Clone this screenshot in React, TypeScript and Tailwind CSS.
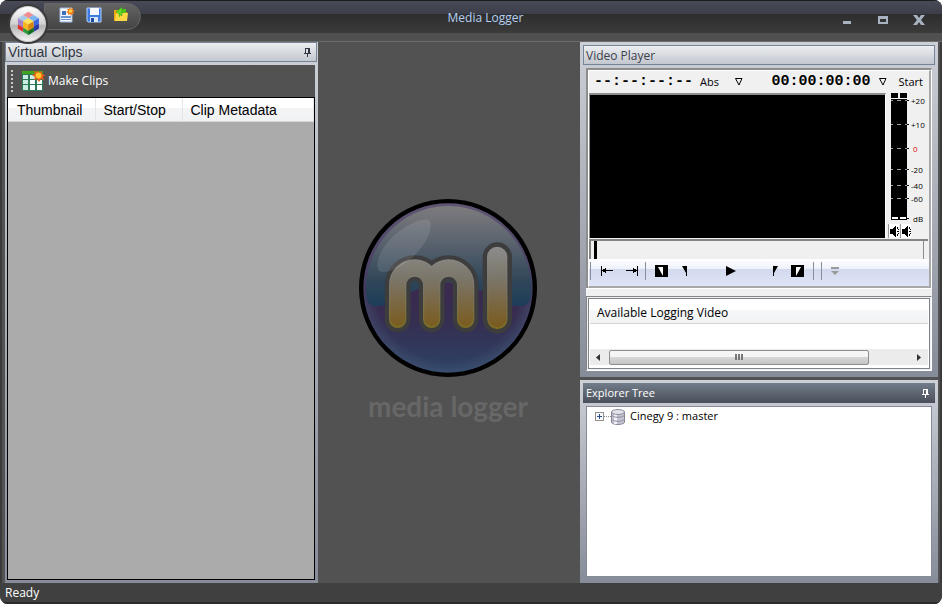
import type { FC, ReactNode } from "react";

const columns = [
	{ name: "Thumbnail", className: "w-[87px]" },
	{ name: "Start/Stop", className: "w-[87px]" },
	{ name: "Clip Metadata", className: "" },
];

const levels = [
	{ label: "+20", y: 8 },
	{ label: "+10", y: 32 },
	{ label: "0", y: 56 },
	{ label: "-20", y: 77 },
	{ label: "-40", y: 93 },
	{ label: "-60", y: 106 },
	{ label: "dB", y: 126 },
];

const Pin: FC = () => (
	<svg width="9" height="9" viewBox="0 0 9 9" fill="currentColor" shapeRendering="crispEdges">
		<path d="M2 0h5v5h1v1H5v3H4V6H1V5h1zM3 1v4h2V1z" fillRule="evenodd" />
	</svg>
);

const AppLogo: FC = () => (
	<svg width="36" height="36" viewBox="0 0 36 36">
		<defs>
			<linearGradient id="orb" x1="0" y1="0" x2="0" y2="1">
				<stop offset="0" stopColor="#fff" />
				<stop offset="0.5" stopColor="#d2d2d2" />
				<stop offset="0.55" stopColor="#b4b4b4" />
				<stop offset="1" stopColor="#f4f4f4" />
			</linearGradient>
		</defs>
		<circle cx="18" cy="18" r="17.5" fill="url(#orb)" stroke="#c9c9c9" />
		<g transform="translate(-.5 -1.500) scale(1.050)">
			<path d="M18 7l5 3-5 3-5-3z" fill="#ee8c92" />
			<path d="M13 10l5 3-5 3-5-3z" fill="#a9cbe8" />
			<path d="M23 10l5 3-5 3-5-3z" fill="#7cb5f0" />
			<path d="M8 13l5 3v6l-5-3z" fill="#a583c8" />
			<path d="M28 13l-5 3v5l5-3z" fill="#3b66e2" />
			<path d="M8 19l5 3v4l-5-3z" fill="#e5302a" />
			<path d="M28 18v5l-5 3v-5z" fill="#2a39a8" />
			<path d="M13 22l5 3 5-3v4l-5 3-5-3z" fill="#2e9a3c" />
			<path d="M18 25l5-3v4l-5 3z" fill="#156c22" />
			<path d="M18 13l5 3-5 3-5-3z" fill="#ffe45c" />
			<path d="M13 16l5 3v6l-5-3z" fill="#f8b51c" />
			<path d="M23 16l-5 3v6l5-3z" fill="#d8850c" />
		</g>
	</svg>
);

const NewIcon: FC = () => (
	<svg width="16" height="16" viewBox="0 0 16 16">
		<path d="M1 1h12v14H1z" fill="#f4f8fe" stroke="#9db7dd" />
		<path d="M3 4h4v4H3z" fill="#3d70b8" />
		<path d="M2 9h10v2H2zM2 12h10v1H2z" fill="#6c95cf" />
		<path d="M11 0l1 2 2-1v2l2 1-2 1 1 2-2 0-1 2-1-2-2 1V6L7 5l2-1-1-2h2z" fill="#f47a20" />
		<circle cx="11.500" cy="4" r="1.800" fill="#ffd23e" />
	</svg>
);

const SaveIcon: FC = () => (
	<svg width="16" height="16" viewBox="0 0 16 16">
		<path d="M1 1h14v14H2l-1-1z" fill="#3b7be2" stroke="#b5d2ff" />
		<path d="M4 1h9v7H4z" fill="#f5f8fd" />
		<path d="M4 10h8v5H4z" fill="#dbe6f8" />
		<path d="M5 11h3v4H5z" fill="#1d4ea6" />
	</svg>
);

const OpenIcon: FC = () => (
	<svg width="16" height="16" viewBox="0 0 16 16">
		<path d="M1 3h5l1 2h7v9H1z" fill="#e9a80e" />
		<path d="M3 6h12l-1 8H2z" fill="#ffd945" />
		<path d="M6 11C5 7 7 5 9 5V2h4v4H9c-1 0-2 2-3 5z" fill="#4cc316" />
		<path d="M9 0L3 5l6 4z" fill="#63d62a" stroke="#34960c" strokeWidth="0.500" />
	</svg>
);

const ClipsIcon: FC = () => (
	<svg width="23" height="22" viewBox="0 0 23 22">
		<path d="M0 1h21v20H0z" fill="#2f7a55" />
		<path d="M0 1h21v3H0z" fill="#3fa51e" />
		<path
			d="M1 5h5v4H1zM8 5h5v4H8zM15 5h5v4h-5zM1 10h5v4H1zM1 15h5v5H1z"
			fill="#c9ebe3"
		/>
		<path d="M8 10h5v4H8zM15 10h5v4h-5zM8 15h5v5H8zM15 15h5v5h-5z" fill="#f5fffd" />
		<path
			d="M16 0l1 3 3-2v3l3 1-2 2 1 3-3-1-2 3-2-3-3 1 1-3-3-2 3-1-1-3 3 1z"
			fill="#ee5a14"
		/>
		<circle cx="16.500" cy="5.500" r="3" fill="#ffc52e" />
	</svg>
);

const DatabaseIcon: FC = () => (
	<svg width="14" height="16" viewBox="0 0 14 16">
		<path d="M.5 3v10c0 3.300 13 3.300 13 0V3z" fill="#c4c4d2" stroke="#858593" />
		<path d="M3 5v10h3V5z" fill="#f1f1f7" />
		<path d="M.5 6c1 3 12 3 13 0M.5 10c1 3 12 3 13 0" fill="none" stroke="#8d8d9b" />
		<ellipse cx="7" cy="3" rx="6.500" ry="2.500" fill="#e2e2ec" stroke="#8d8d9b" />
	</svg>
);

const Speaker: FC = () => (
	<svg width="10" height="14" viewBox="0 0 10 14" shapeRendering="crispEdges">
		<path d="M1 5h3V4h1V3h1V2h1v11H6v-1H5v-1H4v-1H1zM8 3h1v2H8zM9 5h1v1H9zM8 7h2v1H8zM9 9h1v1H9zM8 10h1v2H8z" />
	</svg>
);

const Triangle: FC = () => (
	<svg width="8" height="8" viewBox="0 0 8 8" fill="none" stroke="#000">
		<path d="M.5 .5h6.500L4 7z" />
	</svg>
);

const WindowButton: FC<{ label: string; children: ReactNode }> = ({ label, children }) => (
	<button type="button" aria-label={label} className="flex h-4 w-4 items-center justify-center">
		<svg width="12" height="10" viewBox="0 0 12 10" fill="#a9b2c0">
			{children}
		</svg>
	</button>
);

const TransportButton: FC<{ label: string; children: ReactNode }> = ({ label, children }) => (
	<button type="button" aria-label={label} className="flex h-5 w-4 items-center justify-center">
		<svg width="14" height="14" viewBox="0 0 14 14">
			{children}
		</svg>
	</button>
);

const Divider: FC = () => <span className="h-[18px] w-px bg-[#8b8f9c]" />;

const TitleBar: FC = () => (
	<header className="relative h-[42px] shrink-0 border-b border-[#6c6c6c] bg-[#505050]">
		<div className="flex h-[33px] items-center justify-end border-t border-[#1c1c1e] bg-[linear-gradient(#484b57,#3c3f4a_13px,#2d2d2d_13px,#3b3b3b)] pr-[15px]">
			<h1 className="flex-1 pt-px pl-[132px] text-center text-[12px] text-[#b4d0f2]">Media Logger</h1>
			<div className="flex gap-5 pt-[6px]">
				<WindowButton label="Minimize">
					<path d="M2 6h8v3H2z" />
				</WindowButton>
				<WindowButton label="Maximize">
					<path d="M1 1h10v8H1zM3 4v3h6V4z" fillRule="evenodd" />
				</WindowButton>
				<WindowButton label="Close">
					<path d="M0 0h4l2 3 2-3h4L8 5l4 5H8L6 7l-2 3H0l4-5z" />
				</WindowButton>
			</div>
		</div>
		<nav className="absolute top-[3px] left-[44px] flex h-[27px] w-[97px] gap-[11px] rounded-r-full border border-[#666] bg-linear-to-b from-[#646464] to-[#444] pt-[3px] pl-[14px]">
			<button type="button" aria-label="New" className="h-4"><NewIcon /></button>
			<button type="button" aria-label="Save" className="h-4"><SaveIcon /></button>
			<button type="button" aria-label="Open" className="h-4"><OpenIcon /></button>
		</nav>
		<button
			type="button"
			aria-label="Application menu"
			className="absolute top-[4px] left-[8px] rounded-full border-2 border-[#3a3a3c]"
		>
			<AppLogo />
		</button>
	</header>
);

const VirtualClips: FC = () => (
	<section className="flex w-[313px] shrink-0 flex-col bg-linear-to-b from-[#cdd0d7] to-[#868c99] pr-[3px] pb-[3px]">
		<div className="-mr-[2px] flex h-[20px] items-center justify-between border border-[#76849a] bg-linear-to-b from-[#eceef0] to-[#c3c7cf] pr-[4px] pl-[2px] text-[#303540]">
			<h2 className="font-['Liberation_Sans',sans-serif] text-[14px] leading-[18px]">Virtual Clips</h2>
			<button type="button" aria-label="Pin Virtual Clips"><Pin /></button>
		</div>
		<div className="mt-[3px] ml-[2px] flex h-[32px] shrink-0 items-center bg-[#525252] pl-[4px]">
			<span className="mr-[9px] h-[22px] border-l-2 border-dotted border-[#c8c8c8]" />
			<button type="button" className="flex items-center gap-[3px] text-[12px] text-white">
				<ClipsIcon />
				Make Clips
			</button>
		</div>
		<div className="ml-[2px] flex-1 border border-black bg-[#ababab]">
			<table className="w-full table-fixed border-collapse text-left font-['Liberation_Sans',sans-serif] text-[14px]">
				<thead>
					<tr className="h-[23px] border-b border-[#d5d5d5] bg-[linear-gradient(#fff_45%,#f3f4f6_45%,#f1f2f4)]">
						{columns.map((column) => (
							<th
								key={column.name}
								scope="col"
								className={`border-r border-[#e3e5e8] pt-px pl-[8px] leading-[22px] font-normal first:pl-[9px] ${column.className}`}
							>
								{column.name}
							</th>
						))}
					</tr>
				</thead>
			</table>
		</div>
	</section>
);

const Emblem: FC = () => (
	<main className="flex flex-1 flex-col items-center justify-center pr-[2px] pb-[3px]">
		<svg width="178" height="178" viewBox="27 27 534 534" fill="none">
			<defs>
				<linearGradient id="base" gradientUnits="userSpaceOnUse" x1="0" y1="40" x2="0" y2="550">
					<stop offset="0" stopColor="#6b5070" />
					<stop offset="0.500" stopColor="#3b294e" />
					<stop offset="0.700" stopColor="#352f52" />
					<stop offset="1" stopColor="#2c4264" />
				</linearGradient>
				<linearGradient id="cap" gradientUnits="userSpaceOnUse" x1="0" y1="48" x2="0" y2="350">
					<stop offset="0" stopColor="#7d7c7e" />
					<stop offset="0.400" stopColor="#56606c" />
					<stop offset="0.750" stopColor="#2f4659" />
					<stop offset="1" stopColor="#1d3c5a" />
				</linearGradient>
				<linearGradient id="gold" gradientUnits="userSpaceOnUse" x1="0" y1="170" x2="0" y2="415">
					<stop offset="0" stopColor="#8c8c8c" />
					<stop offset="0.400" stopColor="#7b7568" />
					<stop offset="1" stopColor="#7a5a1c" />
				</linearGradient>
				<linearGradient id="rim" gradientUnits="userSpaceOnUse" x1="0" y1="170" x2="0" y2="415">
					<stop offset="0" stopColor="#8c8c8c" />
					<stop offset="0.500" stopColor="#7b7568" />
					<stop offset="1" stopColor="#7b6c22" />
				</linearGradient>
				<radialGradient id="edge">
					<stop offset="0.850" stopColor="#4d5f7d" stopOpacity="0" />
					<stop offset="1" stopColor="#4d5f7d" stopOpacity="0.400" />
				</radialGradient>
			</defs>
			<circle cx="294" cy="294" r="260" fill="url(#base)" />
			<circle cx="294" cy="294" r="255" fill="url(#edge)" />
			<path
				d="M294 48C160 48 48 160 48 300C48 340 60 352 88 349C160 340 190 277 294 277S430 340 500 349C528 352 544 340 544 300C544 160 430 48 294 48z"
				fill="url(#cap)"
			/>
			<circle cx="294" cy="294" r="260.500" stroke="#000" strokeWidth="13" />
			<g strokeLinecap="round" stroke="#3d3d3d">
				<path d="M143 388V285A51 51 0 0 1 245 285V388M245 285A51 51 0 0 1 347 285V388" strokeWidth="77" />
				<path d="M442 201V387" strokeWidth="88" />
			</g>
			<g strokeLinecap="round" stroke="url(#rim)">
				<path d="M143 388V285A51 51 0 0 1 245 285V388M245 285A51 51 0 0 1 347 285V388" strokeWidth="52" />
				<path d="M441.500 201L442 387" strokeWidth="61" />
			</g>
			<g strokeLinecap="round" stroke="url(#gold)">
				<path d="M143 386V285A51 51 0 0 1 245 285V386M245 285A51 51 0 0 1 347 285V386" strokeWidth="44" />
				<path d="M441.500 201L442 385" strokeWidth="53" />
			</g>
			<path
				d="M85 240C72 205 110 145 165 112C205 88 236 82 241 97C248 130 215 185 165 220C125 247 95 252 85 240z"
				fill="#fff"
				fillOpacity="0.100"
			/>
		</svg>
		<p className="mt-[11px] font-[Lato] text-[28px] leading-[36px] font-bold text-[#676767]">media logger</p>
	</main>
);

const LevelMeter: FC = () => (
	<div className="w-[43px] shrink-0">
		<svg width="43" height="131" viewBox="0 0 43 131" shapeRendering="crispEdges">
			<path d="M5 0h7v5H5zM14 0h7v5h-7zM5 6h16v121H5z" />
			<path d="M6 124h6v2H6zM14 124h6v2h-6z" fill="#fff" />
			{levels.map((level) => (
				<g key={level.label}>
					{level.label !== "dB" && (
						<path d={`M5 ${level.y - 1}h2v1h-2zM11 ${level.y - 1}h4v1h-4zM19 ${level.y - 1}h2v1h-2z`} fill="#a0a0a0" />
					)}
					<path d={`M21 ${level.y - 1}h2v1h-2z`} />
					<text x={level.label === "0" || level.label === "dB" ? 27 : 25} y={level.y + 3} fontSize="8" fill={level.label === "0" ? "#e00010" : "#000"}>
						{level.label}
					</text>
				</g>
			))}
		</svg>
		<div className="flex gap-px pl-[2px]">
			<button type="button" aria-label="Mute left" className="border-l border-[#999] bg-white"><Speaker /></button>
			<button type="button" aria-label="Mute right" className="border-l border-[#999] bg-white"><Speaker /></button>
		</div>
	</div>
);

const VideoPlayer: FC = () => (
	<section className="bg-linear-to-b from-[#cdd0d7] to-[#868c99] px-[3px] pt-[3px] pb-[6px]">
		<h2 className="h-[20px] border border-[#76849a] bg-linear-to-b from-[#eceef0] to-[#c3c7cf] pl-[2px] text-[12px] leading-[19px] text-[#3b404a]">
			Video Player
		</h2>
		<div className="mx-[3px] mt-[3px] border-t-2 border-r border-l-2 border-[#8d8d8d] border-r-white bg-[#f0f0f0]">
			<div className="border-t border-r-2 border-b-2 border-l border-[#a8a8a8] border-t-white border-l-white">
				<div className="flex h-[22px] items-center justify-between pr-[6px] pl-[5px] text-[11px]">
					<div className="flex items-center">
						<span className="font-['Liberation_Mono'] text-[15px] font-bold">--:--:--:--</span>
						<span className="w-[42px] pl-[7px]">Abs</span>
						<button type="button" aria-label="Time mode"><Triangle /></button>
					</div>
					<div className="flex items-center">
						<span className="font-['Liberation_Mono'] text-[15px] font-bold">00:00:00:00</span>
						<button type="button" aria-label="Time position" className="pr-[12px] pl-[8px]"><Triangle /></button>
						<span>Start</span>
					</div>
				</div>
				<div className="flex">
					<div className="h-[145px] flex-1 border-t-2 border-r border-l border-[#8d8d8d] border-r-white bg-black" />
					<LevelMeter />
				</div>
				<div className="mt-px mr-px h-[20px] border-t-2 border-l-2 border-[#858585] pr-[4px] pl-[3px]">
					<input
						type="range"
						aria-label="Position"
						defaultValue={0}
						className="block h-[18px] w-full appearance-none border-r border-[#8d8d8d] bg-transparent [&::-webkit-slider-thumb]:h-[18px] [&::-webkit-slider-thumb]:w-[3px] [&::-webkit-slider-thumb]:appearance-none [&::-webkit-slider-thumb]:bg-black"
					/>
				</div>
				<div className="flex h-[27px] items-center bg-[linear-gradient(#fff,#eef1fa_10px,#d2d9ed_10px,#dfe5f6)] pr-[107px] pb-[3px] pl-px">
					<Divider />
					<div className="flex w-[54px] justify-between pr-[6px] pl-[9px]">
						<TransportButton label="Go to start">
							<path d="M0 2h1v10H0zM1 6h11v1H1zM2 5h2v3H2zM4 4h1v5H4z" shapeRendering="crispEdges" />
						</TransportButton>
						<TransportButton label="Go to end">
							<path d="M13 2h1v10h-1zM2 6h11v1H2zM10 5h2v3h-2zM9 4h1v5H9z" shapeRendering="crispEdges" />
						</TransportButton>
					</div>
					<Divider />
					<div className="flex flex-1 items-center justify-between px-[7px]">
						<div className="flex gap-[8px]">
							<TransportButton label="Set in point">
								<path d="M1 1h13v12H1z" />
								<path d="M4 3h5v9z" fill="#fff" />
							</TransportButton>
							<TransportButton label="Go to in point">
								<path d="M4 2h5v10H8V9z" />
							</TransportButton>
						</div>
						<TransportButton label="Play">
							<path d="M3 2v10l10-5z" />
						</TransportButton>
						<div className="flex gap-[7px]">
							<TransportButton label="Go to out point">
								<path d="M5 2h5L6 9v3H5z" />
							</TransportButton>
							<TransportButton label="Set out point">
								<path d="M0 1h13v12H0z" />
								<path d="M10 3H5v9z" fill="#fff" />
							</TransportButton>
						</div>
					</div>
					<Divider />
					<span className="w-[7px]" />
					<Divider />
					<span className="-mr-[21px] pl-[5px]">
						<TransportButton label="More">
							<path d="M3 3h8v2H3zM3 7h8l-4 4z" fill="#9a9a9a" />
						</TransportButton>
					</span>
				</div>
			</div>
		</div>
		<div className="mx-[3px] h-[8px] border-t border-white bg-[#f0f0f0]" />
		<div className="mx-[3px] border border-[#858585] border-r-white border-b-white">
			<div className="border border-[#f0f0f0]">
				<div className="h-[71px] border border-[#7f838c] bg-white p-px">
					<h3 className="h-[24px] border-b border-[#d5d5d5] bg-[linear-gradient(#fff_45%,#f6f7f8_45%,#f1f2f4)] pl-[7px] text-[12px] leading-[26px]">
						Available Logging Video
					</h3>
					<div className="mt-[25px] flex h-[16px] items-center bg-[#ececec]">
						<button type="button" aria-label="Scroll left" className="pr-[9px] pl-[6px]">
							<svg width="4" height="7" viewBox="0 0 4 7" fill="#333"><path d="M4 0v7L0 3.500z" /></svg>
						</button>
						<div className="flex h-[15px] w-[260px] items-center justify-center gap-px rounded-xs border border-[#8f8f8f] bg-[linear-gradient(#f5f5f5_45%,#d8d8d8_45%,#c4c4c4)]">
							<span className="h-[6px] w-[2px] bg-[#777]" />
							<span className="h-[6px] w-[2px] bg-[#777]" />
							<span className="h-[6px] w-[2px] bg-[#777]" />
						</div>
						<button type="button" aria-label="Scroll right" className="ml-auto pr-[7px]">
							<svg width="4" height="7" viewBox="0 0 4 7" fill="#333"><path d="M0 0v7l4-3.500z" /></svg>
						</button>
					</div>
				</div>
			</div>
		</div>
	</section>
);

const ExplorerTree: FC = () => (
	<section className="flex flex-1 flex-col bg-linear-to-b from-[#cdd0d7] to-[#868c99] px-[3px] pt-[3px] pb-[6px]">
		<div className="flex h-[20px] items-center justify-between bg-linear-to-b from-[#727c8a] to-[#4b505a] pr-[5px] pl-[3px] text-white">
			<h2 className="text-[11px] leading-[20px]">Explorer Tree</h2>
			<button type="button" aria-label="Pin Explorer Tree"><Pin /></button>
		</div>
		<div className="mx-[3px] mt-[3px] flex-1 border border-[#858b98] bg-white pl-[8px]">
			<ul>
				<li className="flex h-[19px] items-center text-[11px]">
					<button type="button" aria-label="Expand">
						<svg width="9" height="9" viewBox="0 0 9 9" shapeRendering="crispEdges">
							<path d="M.5 .5h8v8h-8z" fill="#fafafa" stroke="#8f8f8f" />
							<path d="M2 4h5v1H2zM4 2h1v5H4z" fill="#2c4a8f" />
						</svg>
					</button>
					<span className="w-[7px] border-t border-dotted border-[#888]" />
					<DatabaseIcon />
					<span className="pl-[5px]">Cinegy 9 : master</span>
				</li>
			</ul>
		</div>
	</section>
);

export default function App() {
	return (
		<div className="flex h-screen min-h-[604px] flex-col overflow-hidden rounded-lg bg-[#525252] font-['Open_Sans',sans-serif] text-black">
			<TitleBar />
			<div className="flex flex-1 border-r-2 border-l-2 border-[#3a3a3a] pr-[2px] pl-[3px]">
				<VirtualClips />
				<Emblem />
				<div className="flex w-[358px] shrink-0 flex-col gap-[3px]">
					<VideoPlayer />
					<ExplorerTree />
				</div>
			</div>
			<footer className="h-[21px] shrink-0 border-b-2 border-[#2b2b2e] bg-[#404040] pl-[5px] text-[12px] leading-[20px] text-white">
				Ready
			</footer>
		</div>
	);
}
